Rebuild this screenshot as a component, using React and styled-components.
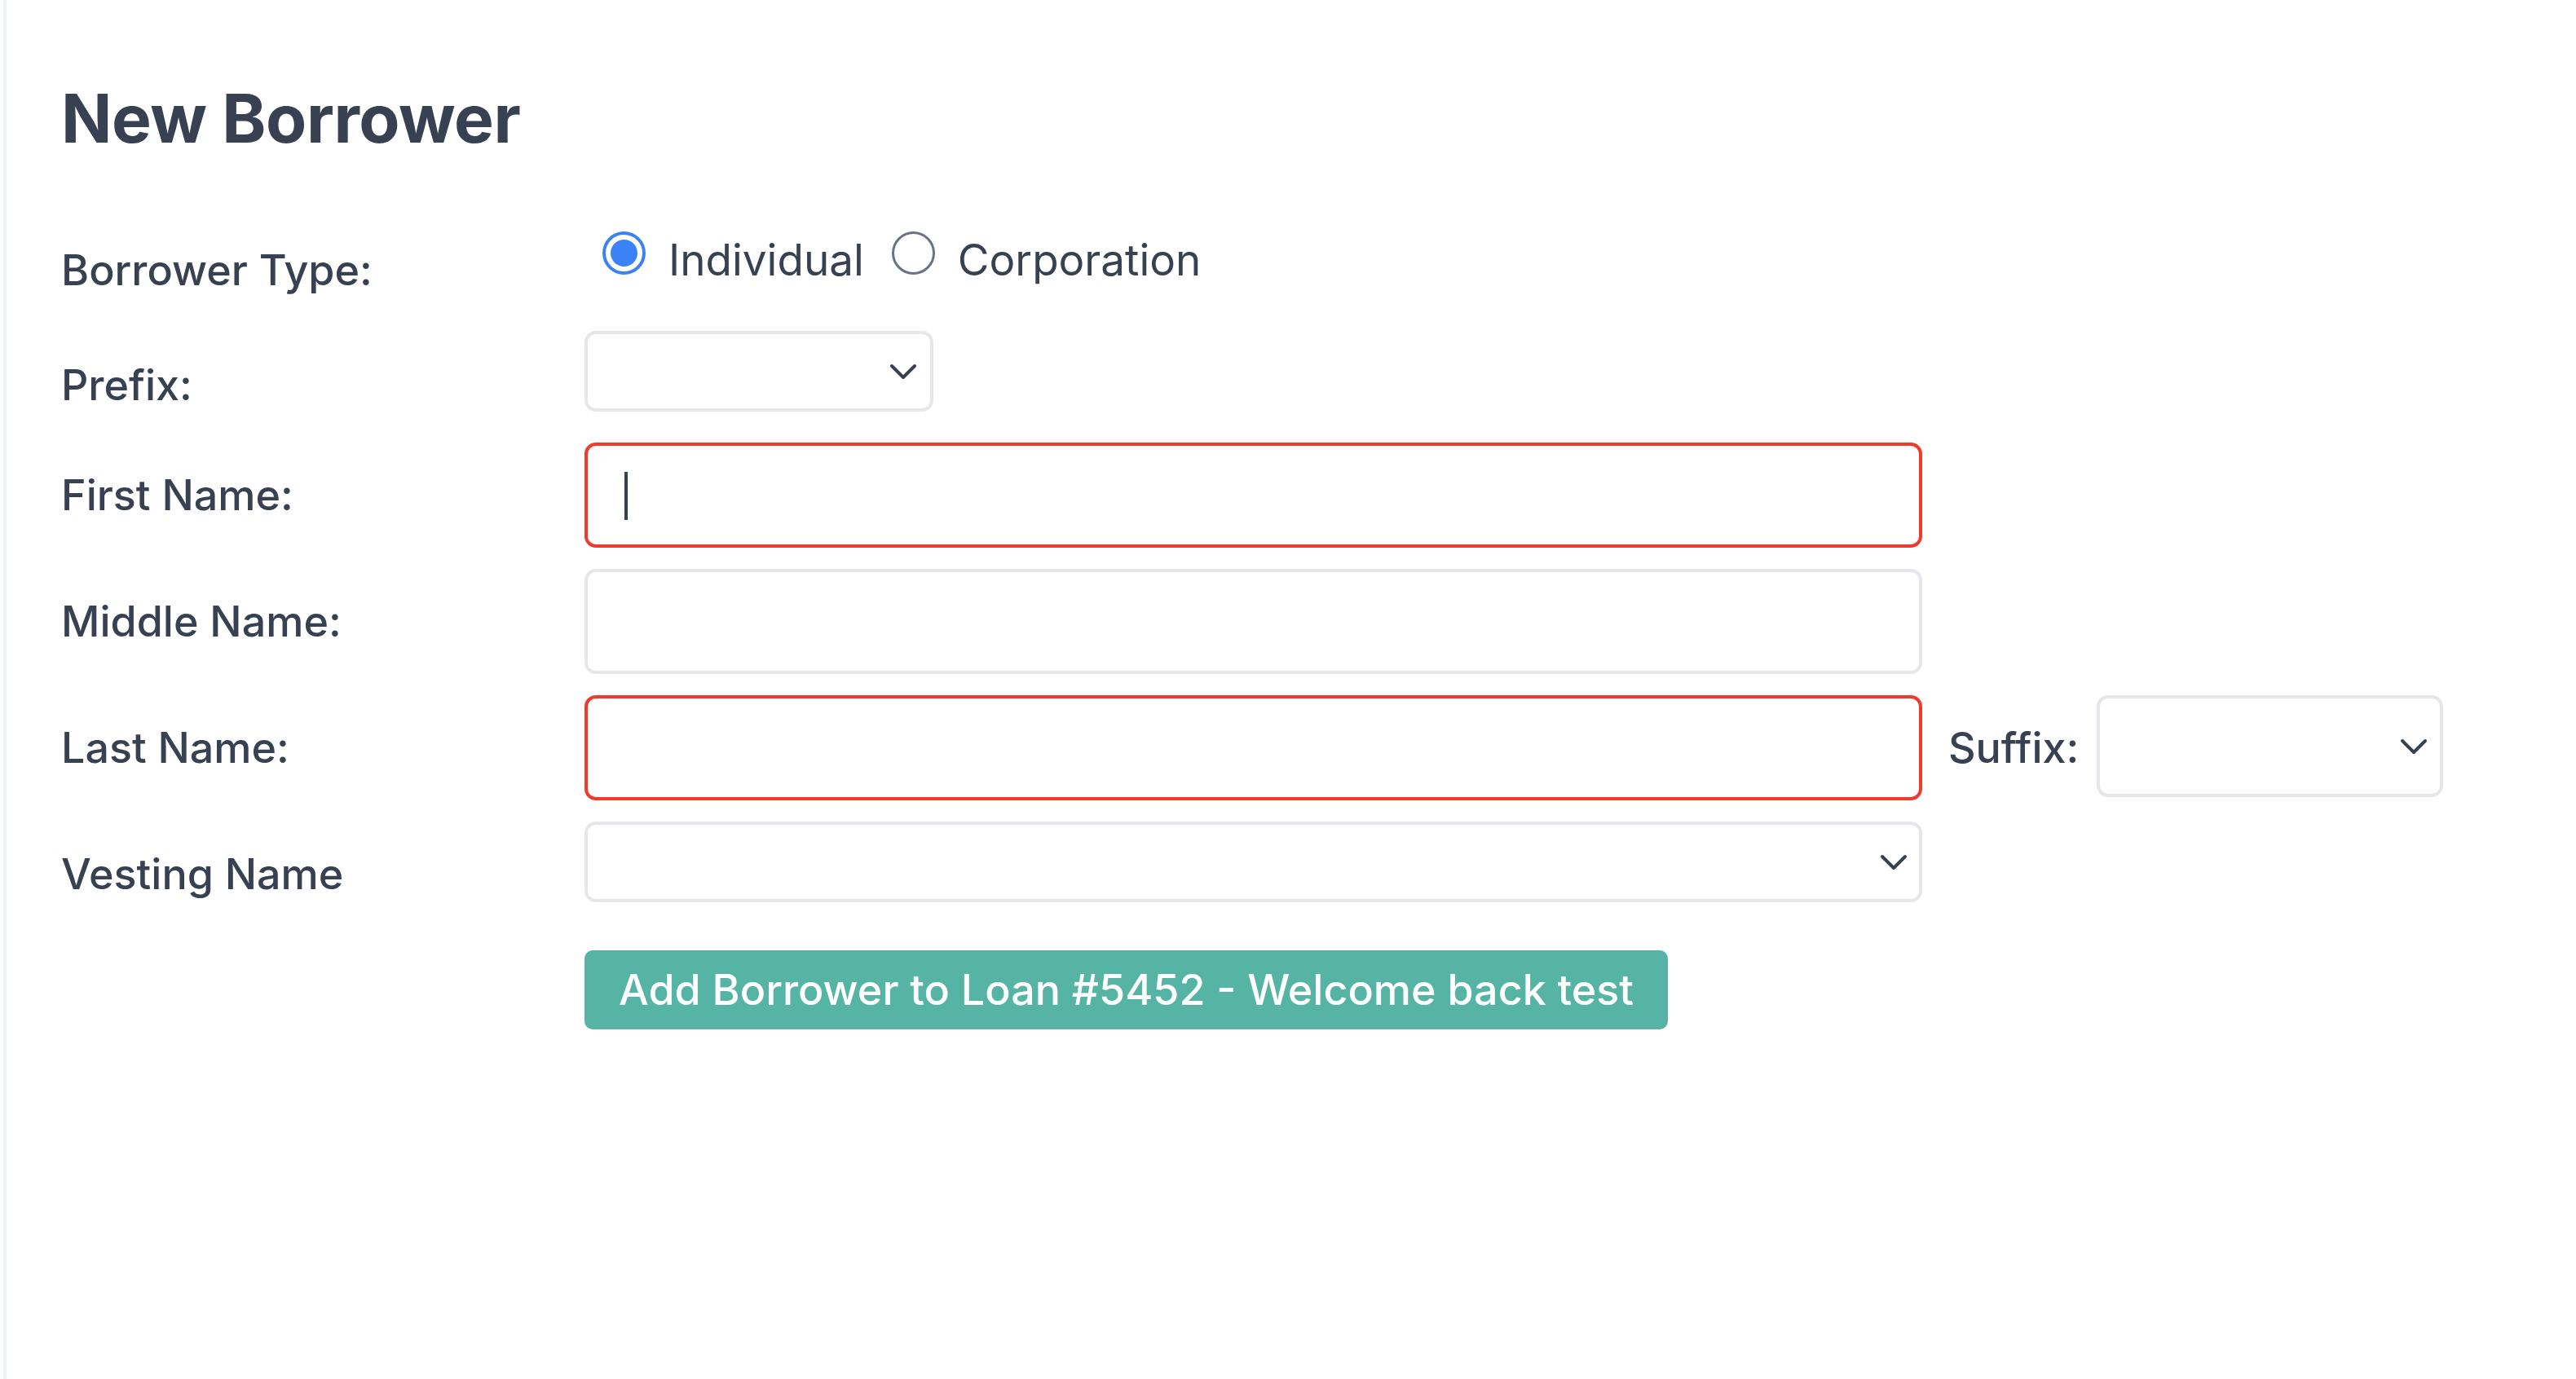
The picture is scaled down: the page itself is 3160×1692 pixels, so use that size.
import React from "react";
import styled, { createGlobalStyle } from "styled-components";

const Global = createGlobalStyle`
  html, body { margin: 0; padding: 0; background: #ffffff; }
  body { font-family: Inter, "Noto Sans", sans-serif; color: #374151; }
  * { box-sizing: border-box; }
`;

const Page = styled.div`
  min-height: 100vh;
  margin-left: 4px;
  border-left: 4px solid #eef1f6;
  padding: 96px 0 0 67px;
`;

const Title = styled.h1`
  margin: 0 0 86px 0;
  font-size: 82px;
  line-height: 100px;
  font-weight: 700;
  color: #374151;
  letter-spacing: -0.5px;
`;

const Form = styled.div`
  display: flex;
  flex-direction: column;
  gap: 26px;
`;

const Row = styled.div`
  display: grid;
  grid-template-columns: 642px auto;
  align-items: start;
  min-height: ${(p) => p.$minHeight || 0}px;
  margin-bottom: ${(p) => p.$extra || 0}px;
`;

const Label = styled.div`
  font-size: 52px;
  font-weight: 500;
  line-height: 64px;
  padding-top: ${(p) => p.$top ?? 33}px;
  color: #374151;
  white-space: nowrap;
`;

const Field = styled.div`
  display: flex;
  align-items: flex-start;
`;

const RadioGroup = styled.div`
  display: flex;
  align-items: center;
  padding-top: 5px;
  padding-left: 22px;
`;

const RadioOption = styled.label`
  display: flex;
  align-items: center;
  margin-right: 34px;
  font-size: 53px;
  font-weight: 400;
  color: #374151;
  line-height: 64px;
`;

const RadioCircle = styled.span`
  width: 53px;
  height: 53px;
  border-radius: 50%;
  border: ${(p) => (p.$checked ? "4px solid #3b82f6" : "3px solid #6b7280")};
  display: inline-flex;
  align-items: center;
  justify-content: center;
  margin-right: 28px;
  margin-top: -18px;
  background: #fff;
  &::after {
    content: "";
    display: ${(p) => (p.$checked ? "block" : "none")};
    width: 33px;
    height: 33px;
    border-radius: 50%;
    background: #3b82f6;
  }
`;

const SelectBox = styled.div`
  position: relative;
  width: ${(p) => p.$width}px;
  height: ${(p) => p.$height || 99}px;
  border: 4px solid #e5e7eb;
  border-radius: 14px;
  background: #fff;
  display: flex;
  align-items: center;
  justify-content: flex-end;
  padding-right: ${(p) => p.$chevronPad || 16}px;
`;

const TextBox = styled.div`
  position: relative;
  width: 1641px;
  height: 129px;
  border: 4px solid ${(p) => (p.$error ? "#ee3b2b" : "#e5e7eb")};
  border-radius: 14px;
  background: #fff;
`;

const Caret = styled.span`
  position: absolute;
  left: 45px;
  top: 32px;
  width: 4px;
  height: 59px;
  background: #374151;
`;

const InlineLabel = styled.div`
  font-size: 52px;
  font-weight: 500;
  line-height: 64px;
  padding-top: 33px;
  margin: 0 22px 0 32px;
  color: #374151;
`;

const Button = styled.button`
  height: 97px;
  padding: 0 42px;
  border: none;
  border-radius: 10px;
  background: #56b4a5;
  color: #ffffff;
  font-family: Inter, "Noto Sans", sans-serif;
  font-size: 52px;
  font-weight: 500;
  line-height: 97px;
  cursor: pointer;
  white-space: nowrap;
`;

const ButtonRow = styled.div`
  padding-left: 642px;
  margin-top: 59px;
`;

const Chevron = () => (
  <svg width="34" height="20" viewBox="0 0 34 20" fill="none">
    <path d="M3 3 L17 17 L31 3" stroke="#374151" strokeWidth="4" strokeLinecap="round" strokeLinejoin="round" />
  </svg>
);

export default function App() {
  return (
    <>
      <Global />
      <Page>
        <Title>New Borrower</Title>
        <Form>
          <Row $minHeight={98}>
            <Label $top={18}>Borrower Type:</Label>
            <RadioGroup>
              <RadioOption>
                <RadioCircle $checked />
                Individual
              </RadioOption>
              <RadioOption>
                <RadioCircle />
                Corporation
              </RadioOption>
            </RadioGroup>
          </Row>
          <Row $extra={12}>
            <Label $top={35}>Prefix:</Label>
            <SelectBox $width={428} $chevronPad={16}>
              <Chevron />
            </SelectBox>
          </Row>
          <Row>
            <Label>First Name:</Label>
            <TextBox $error>
              <Caret />
            </TextBox>
          </Row>
          <Row>
            <Label>Middle Name:</Label>
            <TextBox />
          </Row>
          <Row>
            <Label>Last Name:</Label>
            <Field>
              <TextBox $error />
              <InlineLabel>Suffix:</InlineLabel>
              <SelectBox $width={425} $height={125} $chevronPad={15}>
                <Chevron />
              </SelectBox>
            </Field>
          </Row>
          <Row>
            <Label>Vesting Name</Label>
            <SelectBox $width={1641} $chevronPad={14}>
              <Chevron />
            </SelectBox>
          </Row>
        </Form>
        <ButtonRow>
          <Button>Add Borrower to Loan #5452 - Welcome back test</Button>
        </ButtonRow>
      </Page>
    </>
  );
}
